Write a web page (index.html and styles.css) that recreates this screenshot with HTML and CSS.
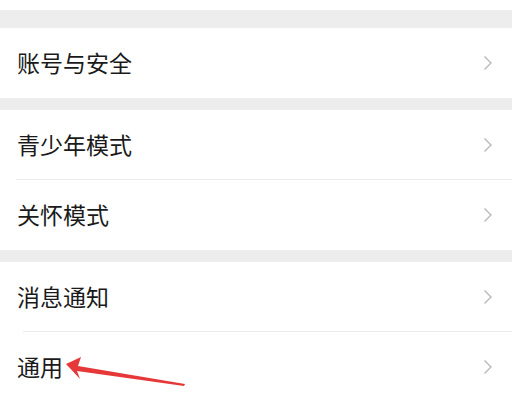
FILE: index.html
```html
<!DOCTYPE html>
<html lang="zh-CN">
<head>
    <meta charset="UTF-8">
    <meta name="viewport" content="width=device-width, initial-scale=1.0">
    <title>设置</title>
    <link rel="stylesheet" href="styles.css">
</head>
<body>
    <div class="settings">
        <div class="top-strip"></div>

        <div class="group">
            <div class="row">
                <span class="label">账号与安全</span>
                <svg class="chevron" width="10" height="16" viewBox="0 0 10 16"><path d="M1.5 1.5 L8 8 L1.5 14.5" fill="none" stroke="#b8b8b8" stroke-width="1.4"/></svg>
            </div>
        </div>

        <div class="group">
            <div class="row divided">
                <span class="label">青少年模式</span>
                <svg class="chevron" width="10" height="16" viewBox="0 0 10 16"><path d="M1.5 1.5 L8 8 L1.5 14.5" fill="none" stroke="#b8b8b8" stroke-width="1.4"/></svg>
            </div>
            <div class="row">
                <span class="label">关怀模式</span>
                <svg class="chevron" width="10" height="16" viewBox="0 0 10 16"><path d="M1.5 1.5 L8 8 L1.5 14.5" fill="none" stroke="#b8b8b8" stroke-width="1.4"/></svg>
            </div>
        </div>

        <div class="group">
            <div class="row divided inset">
                <span class="label">消息通知</span>
                <svg class="chevron" width="10" height="16" viewBox="0 0 10 16"><path d="M1.5 1.5 L8 8 L1.5 14.5" fill="none" stroke="#b8b8b8" stroke-width="1.4"/></svg>
            </div>
            <div class="row">
                <span class="label">通用</span>
                <svg class="chevron" width="10" height="16" viewBox="0 0 10 16"><path d="M1.5 1.5 L8 8 L1.5 14.5" fill="none" stroke="#b8b8b8" stroke-width="1.4"/></svg>
            </div>
        </div>
    </div>

    <!-- annotation arrow drawn over the screenshot -->
    <svg class="arrow" width="527" height="405" viewBox="0 0 527 405">
        <polygon points="66,364 81,357 78,366 185,384 184,386 77,371 80,379" fill="#e63838"/>
    </svg>
</body>
</html>
```

FILE: styles.css
```css
* {
    margin: 0;
    padding: 0;
    box-sizing: border-box;
}

body {
    width: 527px;
    height: 405px;
    overflow: hidden;
    background-color: #fff;
    font-family: "Noto Sans CJK SC", "Noto Sans", sans-serif;
    color: #1a1a1a;
    position: relative;
}

.settings {
    width: 512px;
    background-color: #ededed;
}

.top-strip {
    height: 10px;
    background-color: #fff;
}

.group {
    background-color: #fff;
    margin-top: 18px;
}

.group + .group {
    margin-top: 12px;
}

.row {
    height: 70px;
    display: flex;
    align-items: center;
    justify-content: space-between;
    padding: 0 19px 0 17px;
    position: relative;
}

.row.divided::after {
    content: "";
    position: absolute;
    left: 16px;
    right: 0;
    bottom: 0;
    height: 1px;
    background-color: #ebebeb;
}

.row.inset::after {
    left: 23px;
}

.label {
    font-size: 23px;
    line-height: 1;
    margin-top: -2px;
}

.chevron {
    display: block;
}

.arrow {
    position: absolute;
    top: 0;
    left: 0;
    pointer-events: none;
}
```
